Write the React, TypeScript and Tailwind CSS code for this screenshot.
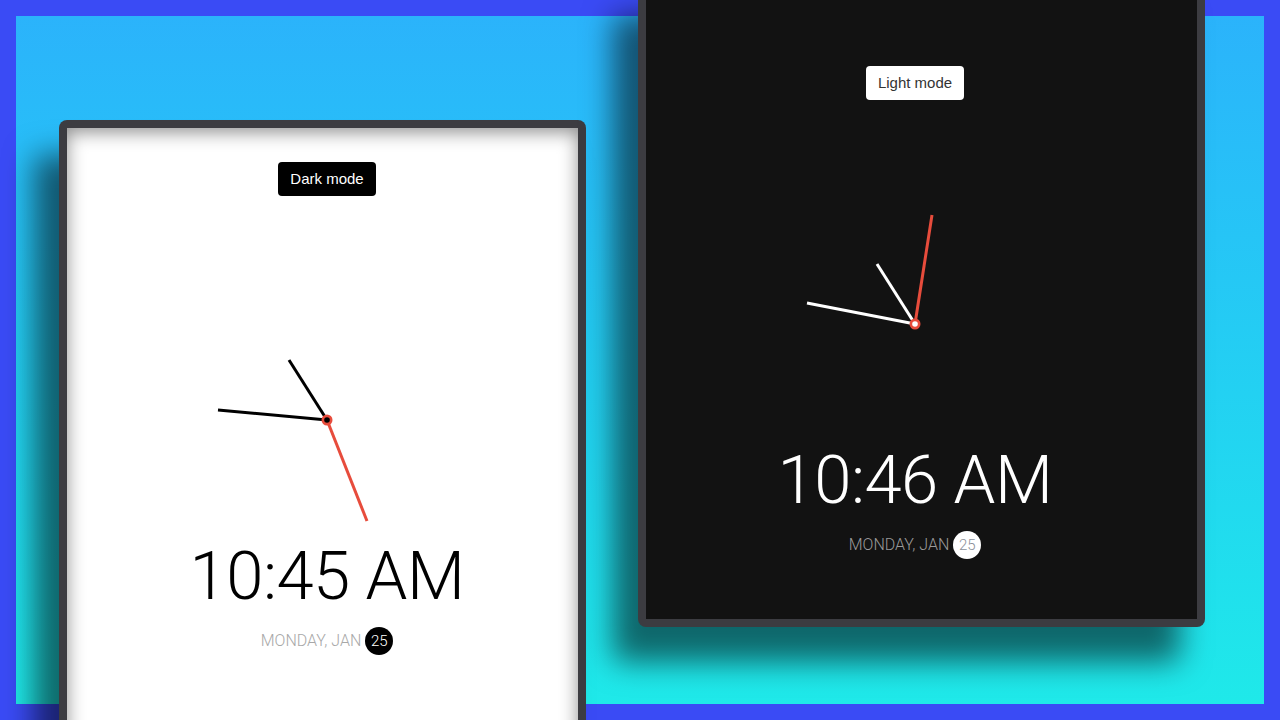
import React from "react";

type Pt = [number, number];

function Clock({ dark, hour, minute, second }: { dark: boolean; hour: Pt; minute: Pt; second: Pt }) {
  const c = 120;
  const hand = dark ? "#ffffff" : "#000000";
  return (
    <svg width="240" height="240" viewBox="0 0 240 240" className="block">
      <line x1={c} y1={c} x2={c + hour[0]} y2={c + hour[1]} stroke={hand} strokeWidth="3" />
      <line x1={c} y1={c} x2={c + minute[0]} y2={c + minute[1]} stroke={hand} strokeWidth="3" />
      <line x1={c} y1={c} x2={c + second[0]} y2={c + second[1]} stroke="#e74c3c" strokeWidth="3" />
      <circle cx={c} cy={c} r="5.5" fill="#e74c3c" />
      <circle cx={c} cy={c} r="2.8" fill={dark ? "#ffffff" : "#000000"} />
    </svg>
  );
}

function Screen({ dark }: { dark: boolean }) {
  return (
    <div
      className={
        "flex flex-col items-center h-full " +
        (dark ? "bg-[#121212] pr-[13px] pt-[78px]" : "bg-white pl-[9px] pt-[34px] shadow-[inset_0_4px_18px_rgba(0,0,0,0.45)]")
      }
    >
      <button
        className={
          "h-[34px] px-[12px] rounded-[4px] text-[15px] " +
          (dark ? "bg-white text-[#333]" : "bg-black text-white")
        }
        style={{ fontFamily: "'Liberation Sans', Arial, sans-serif" }}
      >
        {dark ? "Light mode" : "Dark mode"}
      </button>
      <div className="mt-[104px]">
        {dark ? (
          <Clock dark hour={[-38, -60]} minute={[-108, -21]} second={[17, -109]} />
        ) : (
          <Clock dark={false} hour={[-38, -60]} minute={[-109, -10]} second={[40, 101]} />
        )}
      </div>
      <div
        className={"mt-[3px] text-[67px] leading-none font-light tracking-[-0.5px] " + (dark ? "text-white" : "text-black")}
        style={{ fontFamily: "Roboto, sans-serif" }}
      >
        {dark ? "10:46 AM" : "10:45 AM"}
      </div>
      <div
        className="mt-[17px] flex items-center gap-[4px] text-[16px] font-light"
        style={{ fontFamily: "Roboto, sans-serif" }}
      >
        <span className={dark ? "text-[#9a9a9a]" : "text-[#a8a8a8]"}>MONDAY, JAN</span>
        <span
          className={
            "w-[28px] h-[28px] rounded-full flex items-center justify-center text-[15px] " +
            (dark ? "bg-white text-[#8a8f99]" : "bg-black text-white")
          }
        >
          25
        </span>
      </div>
    </div>
  );
}

export default function App() {
  return (
    <div className="w-[1280px] h-[720px] overflow-hidden bg-[#3a4bf5] p-4">
      <div className="h-full bg-gradient-to-b from-[#2bb3fb] to-[#1fe9e9] flex items-start">
        <div className="ml-[43px] mt-[104px] w-[527px] h-[640px] shrink-0 rounded-lg bg-[#3c3c41] p-[8px] shadow-[-25px_35px_30px_rgba(0,0,0,0.55)]">
          <Screen dark={false} />
        </div>
        <div className="ml-[52px] -mt-[36px] w-[567px] h-[647px] shrink-0 rounded-lg bg-[#3c3c41] p-[8px] shadow-[-25px_35px_30px_rgba(0,0,0,0.55)]">
          <Screen dark />
        </div>
      </div>
    </div>
  );
}
